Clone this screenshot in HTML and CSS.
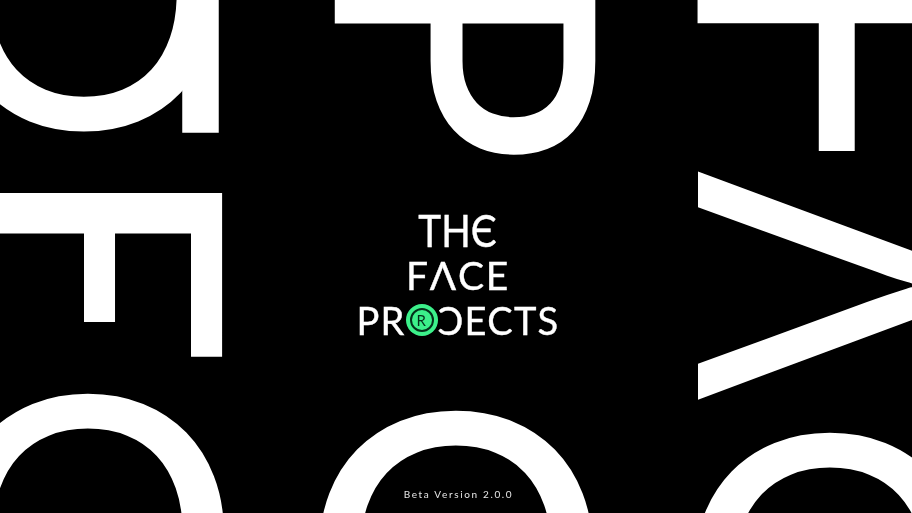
FILE: index.html
```html
<!DOCTYPE html>
<html lang="en">
<head>
<meta charset="utf-8">
<title>The Face Projects</title>
<link rel="stylesheet" href="styles.css">
</head>
<body>
<main class="stage">
  <svg class="art" viewBox="0 0 912 513" aria-hidden="true">
    <text class="big round mid" x="84" y="127">O</text>
    <text class="big stem mid" x="200.5" y="132">I</text>
    <text class="big" transform="translate(337 -43) rotate(90) scale(.95 .99)">P</text>
    <text class="big f-left" transform="translate(-13.4 163.2) rotate(90) scale(.99 .9)">F</text>
    <rect class="trim" x="70" y="322" width="55" height="30"/>
    <text class="big" transform="translate(700 -61) rotate(90) scale(1.2 1.09)">F</text>
    <text class="big lambda mid" transform="translate(699.5 285.7) rotate(90) scale(1.03 1)">&#x39B;</text>
    <text class="big round mid" transform="translate(88 665) scale(1.02 1)">O</text>
    <text class="big round mid" transform="translate(456 682) scale(1.025 1)">O</text>
    <text class="big round mid" transform="translate(830 704) scale(1.02 1)">O</text>
  </svg>
  <div class="content">
    <h1 class="logo">
      <span class="line line-the">TH&#x404;</span>
      <span class="line line-face">F&#x39B;CE</span>
      <span class="line line-projects">PR<span class="mark"><span class="ring">R</span></span>&#x186;ECTS</span>
    </h1>
    <p class="version">Beta Version 2.0.0</p>
  </div>
</main>
</body>
</html>
```
FILE: styles.css
```css
html, body { margin: 0; padding: 0; background: #000; }
.stage {
  position: relative;
  width: 912px;
  height: 513px;
  overflow: hidden;
  background: #000;
  color: #fff;
  font-family: "Lato", "DejaVu Sans", sans-serif;
}
.art { position: absolute; inset: 0; width: 912px; height: 513px; }
.big {
  font-family: "Lato", "DejaVu Sans", sans-serif;
  font-size: 361px;
  fill: #fff;
  stroke: #fff;
  stroke-width: 4.5px;
  stroke-linejoin: miter;
  stroke-miterlimit: 10;
}
.round { font-size: 372px; stroke-width: 3.5px; }
.stem { stroke-width: 1.5px; }
.f-left { stroke-width: 6px; }
.lambda {
  font-family: "Open Sans", "DejaVu Sans", sans-serif;
  stroke-width: 3px;
}
.trim { fill: #000; }
.mid { text-anchor: middle; }
.content {
  position: relative;
  height: 100%;
  box-sizing: border-box;
  padding-top: 208px;
  display: flex;
  flex-direction: column;
  align-items: center;
  will-change: opacity;
}
.logo {
  margin: 0 0 0 4px;
  display: flex;
  flex-direction: column;
  align-items: center;
  font-weight: 400;
  -webkit-text-stroke: .4px #fff;
}
.line { display: flex; align-items: center; white-space: nowrap; }
.line-the { font-size: 44px; line-height: 45px; transform: scaleX(.88); }
.line-face { font-size: 39px; line-height: 45px; letter-spacing: 1.8px; }
.line-projects { font-size: 38px; line-height: 44px; letter-spacing: 1.3px; }
.mark {
  display: flex;
  align-items: center;
  justify-content: center;
  width: 32px;
  height: 32px;
  border-radius: 50%;
  background: #3cf08a;
}
.ring {
  display: flex;
  align-items: center;
  justify-content: center;
  box-sizing: border-box;
  width: 24px;
  height: 24px;
  border: 2px solid #04301a;
  border-radius: 50%;
  color: #04301a;
  font-size: 15px;
  line-height: 1;
  -webkit-text-stroke: 0;
}
.version {
  margin: 145px 0 0 5px;
  font-size: 10px;
  line-height: 14px;
  letter-spacing: 1.65px;
  color: #e6e6e6;
}
```
